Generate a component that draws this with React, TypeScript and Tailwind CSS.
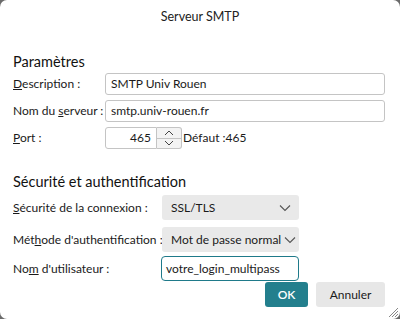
import React from "react";

const Chevron = () => (
  <svg width="12" height="8" viewBox="0 0 12 8" fill="none" stroke="#555" strokeWidth="1.1">
    <path d="M1 1.5 L6 6.5 L11 1.5" />
  </svg>
);

export default function App() {
  const font = { fontFamily: 'Lato, "Noto Sans", sans-serif' };
  return (
    <div className="w-[400px] h-[319px] bg-[#6b6b6b]" style={font}>
      <div className="relative w-[400px] h-[319px] bg-white rounded-[7px] text-[12px] text-[#1a1a1a] overflow-hidden whitespace-nowrap">
        <div className="h-[34px] flex items-center justify-center text-[12.5px] text-[#222]">Serveur SMTP</div>
        <div className="px-[13px]">
          <div className="mt-[18px] h-[20px] flex items-center text-[14.5px] text-[#111]">Paramètres</div>
          <div className="mt-[1px] flex flex-col gap-[5px]">
            <div className="flex items-center">
              <div className="w-[92px] shrink-0"><u>D</u>escription :</div>
              <div className="flex-1 h-[22px] border border-[#c4c4c4] rounded-[3px] flex items-center px-[5px] mr-[2px]">SMTP Univ Rouen</div>
            </div>
            <div className="flex items-center">
              <div className="w-[92px] shrink-0">Nom du <u>s</u>erveur :</div>
              <div className="flex-1 h-[22px] border border-[#c4c4c4] rounded-[3px] flex items-center px-[5px] mr-[2px]">smtp.univ-rouen.fr</div>
            </div>
            <div className="flex items-center">
              <div className="w-[92px] shrink-0"><u>P</u>ort :</div>
              <div className="flex h-[22px]">
                <div className="w-[52px] h-[22px] border border-[#c4c4c4] rounded-l-[3px] flex items-center justify-end pr-[5px]">465</div>
                <div className="w-[25px] h-[22px] border border-l-0 border-[#c4c4c4] rounded-r-[3px] flex flex-col bg-[#f3f3f3]">
                  <div className="flex-1 flex items-center justify-center border-b border-[#c4c4c4]">
                    <svg width="10" height="6" viewBox="0 0 10 6" fill="none" stroke="#444" strokeWidth="1"><path d="M1 5 L5 1 L9 5" /></svg>
                  </div>
                  <div className="flex-1 flex items-center justify-center">
                    <svg width="10" height="6" viewBox="0 0 10 6" fill="none" stroke="#444" strokeWidth="1"><path d="M1 1 L5 5 L9 1" /></svg>
                  </div>
                </div>
              </div>
              <div className="ml-[1px]">Défaut :465</div>
            </div>
          </div>
          <div className="mt-[23px] h-[20px] flex items-center text-[14.5px] text-[#111]">Sécurité et authentification</div>
          <div className="mt-[3px] flex flex-col">
            <div className="flex items-center">
              <div className="w-[149px] shrink-0"><u>S</u>écurité de la connexion :</div>
              <div className="w-[137px] h-[25px] bg-[#e9e9e9] rounded-[3px] flex items-center justify-between pl-[9px] pr-[8px]">
                <span>SSL/TLS</span>
                <Chevron />
              </div>
            </div>
            <div className="flex items-center mt-[7px]">
              <div className="w-[149px] shrink-0">Mét<u>h</u>ode d'authentification :</div>
              <div className="w-[137px] h-[25px] bg-[#e9e9e9] rounded-[3px] flex items-center justify-between pl-[9px] pr-[3px]">
                <span>Mot de passe normal</span>
                <Chevron />
              </div>
            </div>
            <div className="flex items-center mt-[4px]">
              <div className="w-[148px] shrink-0">No<u>m</u> d'utilisateur :</div>
              <div className="w-[138px] h-[25px] border-[1.5px] border-[#1f7a8a] rounded-[4px] flex items-center px-[4px]">votre_login_multipass</div>
            </div>
          </div>
        </div>
        <div className="flex justify-end gap-[8px] pr-[15px] mt-[1px]">
          <div className="w-[43px] h-[25px] bg-[#237f8d] rounded-[3px] flex items-center justify-center text-white font-semibold">OK</div>
          <div className="w-[69px] h-[25px] bg-[#e7e7e7] rounded-[3px] flex items-center justify-center">Annuler</div>
        </div>
        <svg className="absolute right-[1px] bottom-[1px]" width="12" height="12" viewBox="0 0 12 12" stroke="#888" strokeWidth="1">
          <path d="M11 2 L2 11 M11 5 L5 11 M11 8 L8 11" />
        </svg>
      </div>
    </div>
  );
}
